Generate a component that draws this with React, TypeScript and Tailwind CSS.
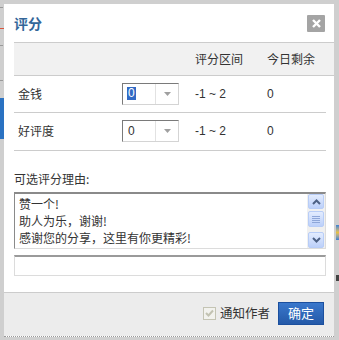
import React from 'react';

const cjk = "font-['Noto_Sans_CJK_SC','Noto_Sans',sans-serif]";

const SelectBox: React.FC<{ active?: boolean }> = ({ active }) => (
  <div className="flex h-[22px] w-[57px] border-t border-l border-t-[#7a7a7a] border-l-[#7a7a7a] border-r border-b border-r-[#d4d4d4] border-b-[#d4d4d4] bg-white">
    <div className="flex flex-1 items-center pl-[4px]">
      <span
        className={
          active
            ? "bg-[#316ac5] text-white px-[1px] leading-[13px] text-[12px] font-['Liberation_Sans',sans-serif]"
            : "text-[#333] px-[1px] leading-[13px] text-[12px] font-['Liberation_Sans',sans-serif]"
        }
      >
        0
      </span>
    </div>
    <div className="flex w-[23px] items-center justify-center border-l border-[#e2e2e2]">
      <svg width="7" height="4" viewBox="0 0 7 4">
        <path d="M0 0 H7 L3.5 4 Z" fill="#a0a0a0" />
      </svg>
    </div>
  </div>
);

const ScrollBtn: React.FC<{ children: React.ReactNode; h: number }> = ({ children, h }) => (
  <div
    className="flex w-[16px] items-center justify-center rounded-[2px] border border-[#b8cdf7] bg-gradient-to-b from-[#e3ecfe] to-[#bcd0fa]"
    style={{ height: h }}
  >
    {children}
  </div>
);

export default function App() {
  return (
    <div className={`flex h-[340px] w-[339px] bg-[#cfcfcf] ${cjk} text-[12px] text-[#333]`}>
      {/* page bits peeking out on the left */}
      <div className="flex w-[4px] flex-col">
        <div className="mt-[7px] h-px w-[3px] bg-[#9a9a9a]" />
        <div className="mt-[18px] flex h-[5px] w-[4px] items-center">
          <div className="h-px w-[4px] bg-[#d9553c]" />
        </div>
        <div className="mt-[14px] h-px w-[3px] bg-[#9a9a9a]" />
        <div className="mt-[34px] h-px w-[3px] bg-[#9a9a9a]" />
        <div className="mt-[17px] h-[41px] w-[4px] bg-[#2a72c2]" />
      </div>

      {/* dialog */}
      <div className="mt-[4px] flex h-[333px] w-[330px] flex-col border-b border-dotted border-[#9a9a9a] bg-white">
        <div className="flex h-[38px] items-center justify-between pl-[10px] pr-[9px]">
          <span className="text-[14px] font-bold leading-none text-[#336699]">评分</span>
          <div className="flex h-[17px] w-[18px] items-center justify-center rounded-[1px] bg-[#a4a4a4]">
            <svg width="9" height="9" viewBox="0 0 9 9">
              <path d="M1 1 L8 8 M8 1 L1 8" stroke="#fff" strokeWidth="2.4" />
            </svg>
          </div>
        </div>

        {/* table header */}
        <div className="ml-[10px] flex h-[34px] items-center border-y border-[#cccccc] bg-[#f1f1f1]">
          <div className="w-[108px]" />
          <div className="w-[73px]" />
          <div className="w-[72px]">评分区间</div>
          <div>今日剩余</div>
        </div>

        {[
          { label: '金钱', active: true, h: 'h-[37px]' },
          { label: '好评度', active: false, h: 'h-[38px]' },
        ].map((r) => (
          <div
            key={r.label}
            className={`ml-[10px] mr-[8px] flex ${r.h} items-center border-b border-[#cccccc] pb-[1px]`}
          >
            <div className="w-[108px] pl-[4px]">{r.label}</div>
            <div className="w-[73px]">
              <SelectBox active={r.active} />
            </div>
            <div className="w-[72px] font-['Liberation_Sans',sans-serif]">-1 ~ 2</div>
            <div className="font-['Liberation_Sans',sans-serif]">0</div>
          </div>
        ))}

        <div className="ml-[10px] mt-[20px] leading-[16px]">可选评分理由:</div>

        {/* reasons list */}
        <div className="ml-[10px] mr-[8px] mt-[5px] flex h-[57px] border-t-2 border-l border-t-[#8a8a8a] border-l-[#8a8a8a] border-r border-b border-r-[#dcdcdc] border-b-[#dcdcdc]">
          <div className="flex-1 overflow-hidden pl-[4px] pt-[1px] leading-[17px] whitespace-nowrap">
            <div>赞一个!</div>
            <div>助人为乐，谢谢!</div>
            <div>感谢您的分享，这里有你更精彩!</div>
          </div>
          <div className="flex w-[18px] flex-col items-center bg-[#f0f0f0]">
            <ScrollBtn h={15}>
              <svg width="9" height="6" viewBox="0 0 9 6">
                <path d="M1 5 L4.5 1.5 L8 5" stroke="#4d6185" strokeWidth="2" fill="none" />
              </svg>
            </ScrollBtn>
            <div className="mt-[2px]">
              <ScrollBtn h={16}>
                <svg width="8" height="7" viewBox="0 0 8 7">
                  <path d="M0 0.5 H8 M0 2.5 H8 M0 4.5 H8 M0 6.5 H8" stroke="#8ea6d8" strokeWidth="1" />
                </svg>
              </ScrollBtn>
            </div>
            <div className="flex-1" />
            <ScrollBtn h={16}>
              <svg width="9" height="6" viewBox="0 0 9 6">
                <path d="M1 1 L4.5 4.5 L8 1" stroke="#4d6185" strokeWidth="2" fill="none" />
              </svg>
            </ScrollBtn>
          </div>
        </div>

        <div className="ml-[10px] mr-[8px] mt-[6px] h-[21px] border-t-2 border-t-[#9a9a9a] border-x border-b border-x-[#dcdcdc] border-b-[#dcdcdc]" />

        <div className="flex-1" />

        {/* footer */}
        <div className="flex h-[44px] items-center justify-end border-t border-[#cccccc] bg-[#ececec] pb-[3px] pr-[10px]">
          <div className="flex h-[13px] w-[13px] items-center justify-center border border-[#c4c4b4] bg-[#f2f2ee]">
            <svg width="9" height="8" viewBox="0 0 9 8">
              <path d="M1 4 L3.5 6.5 L8 1.5" stroke="#c2c2b2" strokeWidth="2" fill="none" />
            </svg>
          </div>
          <span className="ml-[4px] text-[12.5px] text-[#333]">通知作者</span>
          <button className="ml-[8px] flex h-[23px] w-[46px] items-center justify-center border border-[#1b4f9e] bg-gradient-to-b from-[#3a78cc] to-[#2459a8] text-[13px] text-white">
            确定
          </button>
        </div>
      </div>

      {/* page bits on the right */}
      <div className="flex w-[5px] flex-col">
        <div className="ml-[2px] mt-[225px] h-[15px] w-[3px] bg-gradient-to-b from-[#3b7fd0] via-[#e8c040] to-[#3b7fd0]" />
        <div className="ml-[2px] mt-[35px] h-[6px] w-[3px] bg-[#444]" />
      </div>
    </div>
  );
}
